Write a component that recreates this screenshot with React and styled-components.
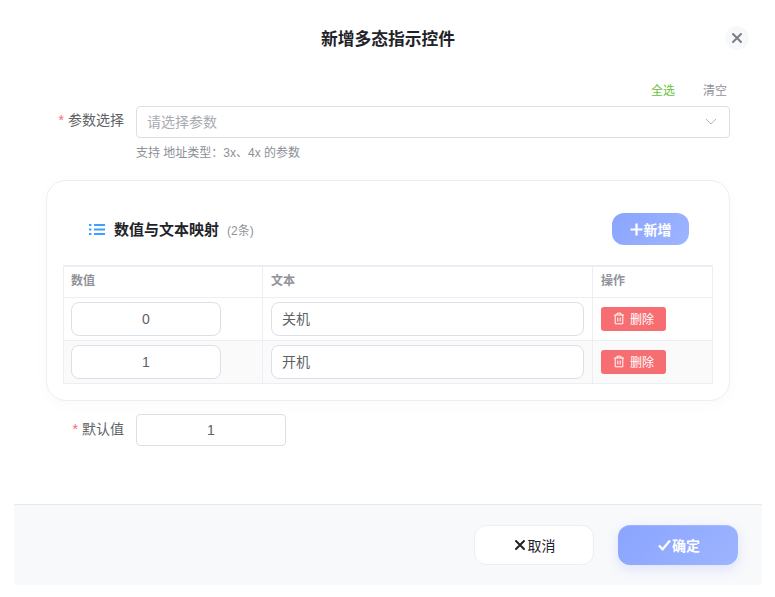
import React from "react";
import styled, { createGlobalStyle } from "styled-components";

const FONT = `"Liberation Sans", "Noto Sans CJK SC", sans-serif`;

const Global = createGlobalStyle`
  html, body { margin: 0; padding: 0; background: #fff; }
  body { font-family: ${FONT}; color: #606266; }
  * { box-sizing: border-box; }
`;

const Dialog = styled.div`
  width: 748px;
  height: 585px;
  margin-left: 14px;
  display: flex;
  flex-direction: column;
`;
const Header = styled.header`
  position: relative;
  height: 78px;
  padding-top: 27px;
  text-align: center;
  font-size: 16.75px;
  line-height: 26px;
  font-weight: 700;
  color: #1f2329;
`;
const CloseButton = styled.div`
  position: absolute;
  right: 13px;
  top: 26px;
  width: 24px;
  height: 24px;
  border-radius: 50%;
  background: #f7f8fa;
  color: #7a7d84;
  display: flex;
  align-items: center;
  justify-content: center;
`;
const Body = styled.div`
  flex: 1;
  padding: 0 32px;
`;
const Actions = styled.div`
  display: flex;
  justify-content: flex-end;
  gap: 28px;
  padding: 0 3px 2px 0;
  height: 28px;
  align-items: center;
  font-size: 12px;
`;
const Action = styled.span`
  color: ${(p) => p.$color};
  line-height: 26px;
`;
const FormRow = styled.div`
  display: flex;
  align-items: flex-start;
`;
const Label = styled.label`
  width: 90px;
  padding-right: 12px;
  text-align: right;
  font-size: 14px;
  line-height: 29px;
  color: #606266;
  flex: none;
`;
const Star = styled.span`
  color: #f56c6c;
  margin-right: 4px;
`;
const Select = styled.div`
  width: 594px;
  height: 32px;
  border: 1px solid #dcdfe6;
  border-radius: 4px;
  background: #fff;
  display: flex;
  align-items: center;
  justify-content: space-between;
  padding: 0 12px 2px 10px;
  font-size: 14px;
  color: #a8abb2;
`;
const Hint = styled.div`
  margin: 6px 0 0 90px;
  font-size: 12px;
  line-height: 18px;
  color: #8c8f96;
`;
const Card = styled.section`
  width: 684px;
  height: 221px;
  margin-top: 18px;
  border: 1px solid #eceef2;
  border-radius: 20px;
  background: #fff;
  box-shadow: 0 4px 16px rgba(30, 40, 80, 0.025);
  padding: 0 16px;
`;
const CardHead = styled.div`
  height: 84px;
  display: flex;
  align-items: center;
  padding: 32px 24px 20px 26px;
`;
const CardTitle = styled.h3`
  margin: -2px 0 0 9px;
  font-size: 15px;
  font-weight: 700;
  color: #1f2329;
`;
const Count = styled.span`
  margin-left: 8px;
  font-size: 12px;
  color: #909399;
`;
const AddButton = styled.button`
  margin-left: auto;
  width: 77px;
  height: 32px;
  border: 0;
  border-radius: 12px;
  background: linear-gradient(135deg, #8aa4ff, #9db5ff);
  color: #fff;
  font: 700 14px ${FONT};
  display: flex;
  align-items: center;
  justify-content: center;
  gap: 1px;
  padding: 0;
`;
const Table = styled.div`
  width: 650px;
  border: 1px solid #ebeef5;
  border-top-width: 2px;
  display: grid;
  grid-template-columns: 199px 330px 1fr;
`;
const HeadCell = styled.div`
  height: 31px;
  padding: ${(p) => (p.$wide ? "0 8px" : "0 7px")};
  font-size: 12px;
  line-height: 29px;
  font-weight: 700;
  color: #909399;
  border-bottom: 1px solid #ebeef5;
  border-right: ${(p) => (p.$last ? "0" : "1px solid #ebeef5")};
`;
const Cell = styled.div`
  height: ${(p) => (p.$end ? "42px" : "43px")};
  padding: ${(p) => (p.$wide ? "0 8px" : "0 7px")};
  background: ${(p) => (p.$striped ? "#fafafa" : "#fff")};
  display: flex;
  align-items: center;
  border-bottom: ${(p) => (p.$end ? "0" : "1px solid #ebeef5")};
  border-right: ${(p) => (p.$last ? "0" : "1px solid #ebeef5")};
`;
const NumberInput = styled.div`
  width: 150px;
  height: 34px;
  border: 1px solid #dcdfe6;
  border-radius: 8px;
  background: #fff;
  font-size: 14px;
  line-height: 32px;
  text-align: center;
  color: #606266;
`;
const TextInput = styled.div`
  width: 313px;
  height: 34px;
  border: 1px solid #dcdfe6;
  border-radius: 8px;
  background: #fff;
  font-size: 14px;
  line-height: 32px;
  padding-left: 10px;
  color: #606266;
`;
const DeleteButton = styled.button`
  width: 65px;
  height: 24px;
  border: 0;
  border-radius: 3px;
  background: #f76e72;
  color: #fff;
  font: 12px ${FONT};
  display: flex;
  align-items: center;
  justify-content: center;
  gap: 5px;
  padding: 0 0 1px;
`;
const DefaultRow = styled(FormRow)`
  margin-top: 13px;
`;
const DefaultLabel = styled(Label)`
  line-height: 30px;
`;
const DefaultInput = styled.div`
  width: 150px;
  height: 32px;
  border: 1px solid #dcdfe6;
  border-radius: 4px;
  font-size: 14px;
  line-height: 30px;
  text-align: center;
  color: #606266;
`;
const Footer = styled.footer`
  height: 81px;
  border-top: 1px solid #e8e9ed;
  background: #f8f9fb;
  display: flex;
  justify-content: flex-end;
  align-items: flex-start;
  gap: 24px;
  padding: 20px 24px 0 0;
`;
const FootButton = styled.button`
  width: 120px;
  height: 40px;
  border-radius: 12px;
  font: ${(p) => (p.$primary ? 700 : 400)} 14px ${FONT};
  color: ${(p) => (p.$primary ? "#fff" : "#1f2329")};
  background: ${(p) => (p.$primary ? "linear-gradient(135deg, #8aa4ff, #9db5ff)" : "#fff")};
  border: ${(p) => (p.$primary ? "0" : "1px solid #eceef2")};
  box-shadow: ${(p) =>
    p.$primary ? "0 4px 12px rgba(138, 164, 255, 0.25), inset 0 1px 0 rgba(255, 255, 255, 0.15)" : "none"};
  display: flex;
  align-items: center;
  justify-content: center;
  gap: ${(p) => (p.$primary ? "1px" : "2px")};
  padding: ${(p) => (p.$primary ? "0 0 0 2px" : "0 0 0 1px")};
`;

const X = ({ size = 12, width = 2 }) => (
  <svg width={size} height={size} viewBox="0 0 12 12" fill="none" stroke="currentColor" strokeWidth={width} strokeLinecap="round">
    <path d="M2 2l8 8M10 2l-8 8" />
  </svg>
);
const ListIcon = () => (
  <svg width="16" height="13" viewBox="0 0 16 13" fill="none" stroke="#409eff" strokeWidth="2">
    <path d="M5 2h11M5 6.5h11M5 11h11" />
    <path d="M0 2h2.4M0 6.5h2.4M0 11h2.4" />
  </svg>
);
const Plus = () => (
  <svg width="13" height="13" viewBox="0 0 13 13" stroke="#fff" strokeWidth="2.2">
    <path d="M6.5 0.5v12M0.5 6.5h12" />
  </svg>
);
const Trash = () => (
  <svg width="12" height="13" viewBox="0 0 12 13" fill="none" stroke="#fff" strokeWidth="1">
    <path d="M1 3h10M4 3V1.2h4V3M2.2 3v8.8h7.6V3M4.8 5.5v4M7.2 5.5v4" />
  </svg>
);
const Check = () => (
  <svg width="13" height="12" viewBox="0 0 13 12" fill="none" stroke="#fff" strokeWidth="2.2">
    <path d="M1 6.5l3.6 3.8L12 1.5" />
  </svg>
);
const Chevron = () => (
  <svg width="12" height="12" viewBox="0 0 12 12" fill="none" stroke="#b4b7bd" strokeWidth="1">
    <path d="M1 4l5 5 5-5" />
  </svg>
);

const rows = [
  { value: "0", text: "关机" },
  { value: "1", text: "开机" },
];

export default function App() {
  return (
    <Dialog>
      <Global />
      <Header>
        新增多态指示控件
        <CloseButton><X /></CloseButton>
      </Header>
      <Body>
        <Actions>
          <Action $color="#67c23a">全选</Action>
          <Action $color="#909399">清空</Action>
        </Actions>
        <FormRow>
          <Label><Star>*</Star>参数选择</Label>
          <Select>请选择参数<Chevron /></Select>
        </FormRow>
        <Hint>支持 地址类型：3x、4x 的参数</Hint>
        <Card>
          <CardHead>
            <ListIcon />
            <CardTitle>数值与文本映射</CardTitle>
            <Count>(2条)</Count>
            <AddButton><Plus />新增</AddButton>
          </CardHead>
          <Table>
            <HeadCell>数值</HeadCell>
            <HeadCell $wide>文本</HeadCell>
            <HeadCell $wide $last>操作</HeadCell>
            {rows.map((r, i) => (
              <React.Fragment key={r.value}>
                <Cell $striped={i === 1} $end={i === 1}><NumberInput>{r.value}</NumberInput></Cell>
                <Cell $striped={i === 1} $end={i === 1} $wide><TextInput>{r.text}</TextInput></Cell>
                <Cell $striped={i === 1} $end={i === 1} $wide $last>
                  <DeleteButton><Trash />删除</DeleteButton>
                </Cell>
              </React.Fragment>
            ))}
          </Table>
        </Card>
        <DefaultRow>
          <DefaultLabel><Star>*</Star>默认值</DefaultLabel>
          <DefaultInput>1</DefaultInput>
        </DefaultRow>
      </Body>
      <Footer>
        <FootButton><X size={12} />取消</FootButton>
        <FootButton $primary><Check />确定</FootButton>
      </Footer>
    </Dialog>
  );
}
